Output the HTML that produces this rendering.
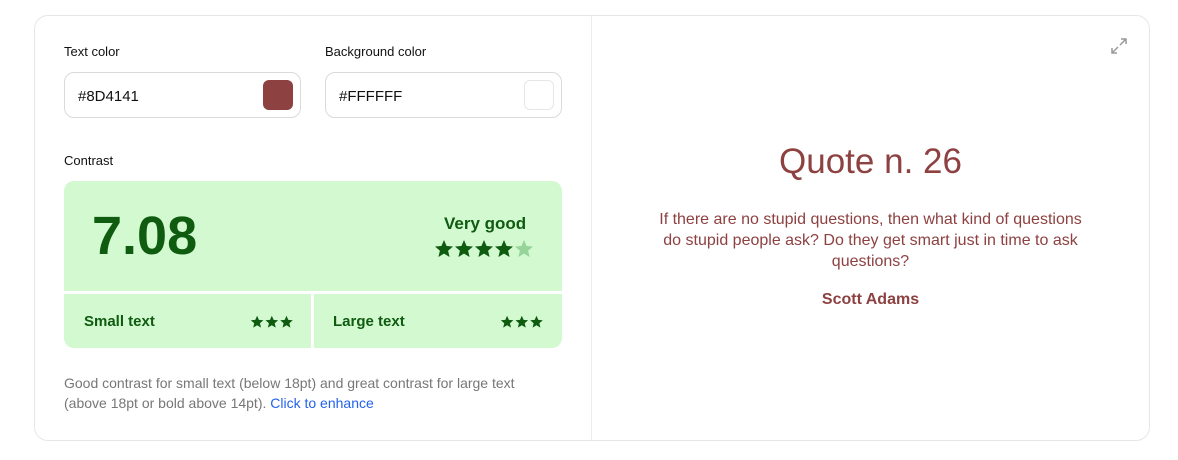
<!DOCTYPE html>
<html><head><style>
*{box-sizing:border-box;margin:0;padding:0}
body{width:1178px;height:460px;background:#fff;font-family:"Liberation Sans",sans-serif;position:relative;overflow:hidden}
.card{position:absolute;left:34px;top:15px;width:1116px;height:426px;border:1px solid #e6e6e6;border-radius:14px}
.div{position:absolute;left:591px;top:16px;width:1px;height:424px;background:#ececec}
.lbl{position:absolute;font-size:13px;color:#111}
.inp{position:absolute;top:72px;width:237px;height:46px;border:1px solid #dadada;border-radius:10px;font-size:15px;color:#111;padding:15px 0 0 13px}
.sw{position:absolute;right:7px;top:7px;width:30px;height:30px;border-radius:6px}
.box{position:absolute;left:64px;top:181px;width:498px;height:167px;background:#d3f9d1;border-radius:10px;overflow:hidden;color:#0f5b0f}
svg.s{position:absolute}
</style></head><body>
<svg width="0" height="0" style="position:absolute"><defs><path id="st" d="M10 1l2.6 6 6.4.5-4.9 4.2 1.5 6.3L10 14.6 4.4 18l1.5-6.3L1 7.5l6.4-.5z"/></defs></svg>
<div class="card"></div><div class="div"></div>
<div class="lbl" style="left:64px;top:44px">Text color</div>
<div class="lbl" style="left:325px;top:44px">Background color</div>
<div class="inp" style="left:64px">#8D4141<div class="sw" style="background:#8d4141"></div></div>
<div class="inp" style="left:325px">#FFFFFF<div class="sw" style="border:1px solid #e6e6e6"></div></div>
<div class="lbl" style="left:64px;top:153px">Contrast</div>
<div class="box">
<div style="position:absolute;left:28px;top:24px;font-size:54px;font-weight:bold">7.08</div>
<div style="position:absolute;left:380px;top:33px;font-size:17px;font-weight:bold">Very good</div>
<svg class="s" style="left:370px;top:58px" width="100" height="20" viewBox="0 0 100 20" fill="#0f5b0f"><use href="#st"/><use href="#st" x="20"/><use href="#st" x="40"/><use href="#st" x="60"/><use href="#st" x="80" fill="#96d49a"/></svg>
<div style="position:absolute;left:0;top:110px;width:498px;height:3px;background:#fff"></div>
<div style="position:absolute;left:247px;top:110px;width:3px;height:60px;background:#fff"></div>
<div style="position:absolute;left:20px;top:132px;font-size:15px;font-weight:bold">Small text</div>
<svg class="s" style="left:186px;top:134px" width="45" height="14" viewBox="0 0 64 20" fill="#0f5b0f"><use href="#st"/><use href="#st" x="21"/><use href="#st" x="42"/></svg>
<div style="position:absolute;left:269px;top:132px;font-size:15px;font-weight:bold">Large text</div>
<svg class="s" style="left:436px;top:134px" width="45" height="14" viewBox="0 0 64 20" fill="#0f5b0f"><use href="#st"/><use href="#st" x="21"/><use href="#st" x="42"/></svg>
</div>
<div style="position:absolute;left:64px;top:373px;font-size:14px;line-height:20px;color:#777;width:490px">Good contrast for small text (below 18pt) and great contrast for large text (above 18pt or bold above 14pt). <span style="color:#2463eb">Click to enhance</span></div>
<svg style="position:absolute;left:1110px;top:37px" width="18" height="18" viewBox="0 0 18 18" fill="none" stroke="#999" stroke-width="1.5"><path d="M11 2h5v5M16 2l-6 6M7 16H2v-5M2 16l6-6"/></svg>
<div style="position:absolute;left:592px;top:142px;width:557px;text-align:center;color:#8d4141">
<div style="font-size:35px">Quote n. 26</div>
<div style="font-size:16px;line-height:21px;margin:27px auto 0;width:430px">If there are no stupid questions, then what kind of questions do stupid people ask? Do they get smart just in time to ask questions?</div>
<div style="font-size:16px;font-weight:bold;margin-top:19px">Scott Adams</div>
</div>
</body></html>
